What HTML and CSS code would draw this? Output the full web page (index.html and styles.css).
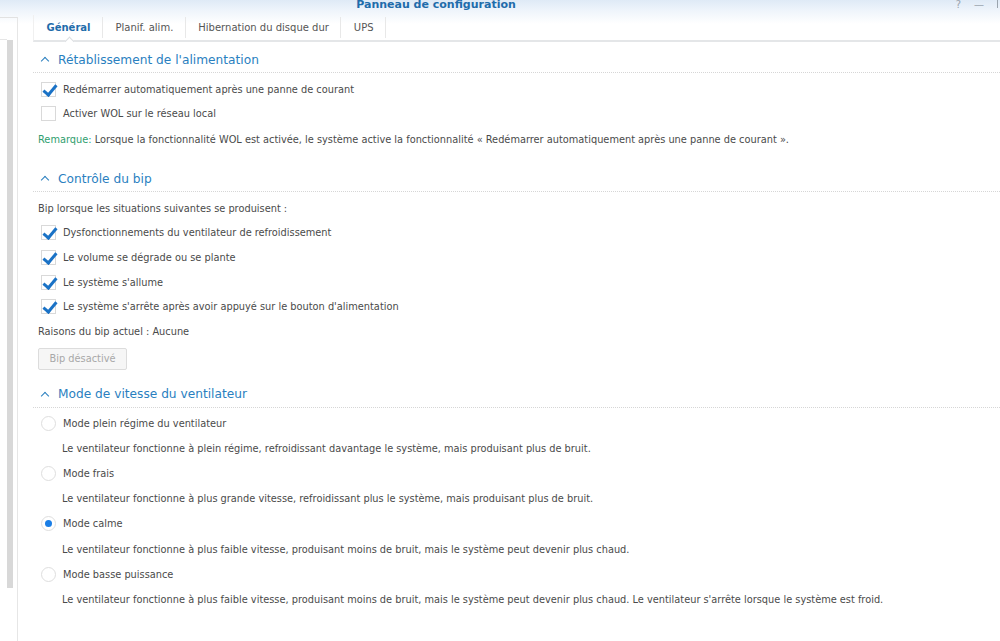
FILE: index.html
```html
<!DOCTYPE html>
<html lang="fr">
<head>
<meta charset="utf-8">
<title>Panneau de configuration</title>
<link rel="stylesheet" href="styles.css">
</head>
<body>
<div class="window">
  <div class="titlebar">
    <span class="title">Panneau de configuration</span>
    <div class="win-btns">
      <span class="wb">?</span>
      <span class="wb">—</span>
      <span class="wb-cut"></span>
    </div>
  </div>
  <div class="body">
    <aside class="sidebar">
      <div class="side-box"></div>
      <div class="side-scroll"></div>
    </aside>
    <main class="main">
      <nav class="tabs">
        <span class="tab active">Général</span>
        <span class="tab">Planif. alim.</span>
        <span class="tab">Hibernation du disque dur</span>
        <span class="tab">UPS</span>
      </nav>

      <section class="section s1">
        <h2 class="sec-head"><span class="caret"></span>Rétablissement de l'alimentation</h2>
        <div class="sec-body">
          <div class="row cb-row"><span class="cb checked"></span>Redémarrer automatiquement après une panne de courant</div>
          <div class="row cb-row"><span class="cb"></span>Activer WOL sur le réseau local</div>
          <div class="row note"><span class="green">Remarque:</span>&nbsp;Lorsque la fonctionnalité WOL est activée, le système active la fonctionnalité « Redémarrer automatiquement après une panne de courant ».</div>
        </div>
      </section>

      <section class="section s2">
        <h2 class="sec-head"><span class="caret"></span>Contrôle du bip</h2>
        <div class="sec-body">
          <div class="row r24">Bip lorsque les situations suivantes se produisent :</div>
          <div class="row r24 cb-row"><span class="cb checked"></span>Dysfonctionnements du ventilateur de refroidissement</div>
          <div class="row r24 cb-row"><span class="cb checked"></span>Le volume se dégrade ou se plante</div>
          <div class="row r24 cb-row"><span class="cb checked"></span>Le système s'allume</div>
          <div class="row r24 cb-row"><span class="cb checked"></span>Le système s'arrête après avoir appuyé sur le bouton d'alimentation</div>
          <div class="row r24">Raisons du bip actuel : Aucune</div>
          <button class="btn" disabled>Bip désactivé</button>
        </div>
      </section>

      <section class="section s3">
        <h2 class="sec-head"><span class="caret"></span>Mode de vitesse du ventilateur</h2>
        <div class="sec-body">
          <div class="row r25 rd-row"><span class="rd"></span>Mode plein régime du ventilateur</div>
          <div class="row r25 desc">Le ventilateur fonctionne à plein régime, refroidissant davantage le système, mais produisant plus de bruit.</div>
          <div class="row r25 rd-row"><span class="rd"></span>Mode frais</div>
          <div class="row r25 desc">Le ventilateur fonctionne à plus grande vitesse, refroidissant plus le système, mais produisant plus de bruit.</div>
          <div class="row r25 rd-row"><span class="rd on"></span>Mode calme</div>
          <div class="row r25 desc">Le ventilateur fonctionne à plus faible vitesse, produisant moins de bruit, mais le système peut devenir plus chaud.</div>
          <div class="row r25 rd-row"><span class="rd"></span>Mode basse puissance</div>
          <div class="row r25 desc">Le ventilateur fonctionne à plus faible vitesse, produisant moins de bruit, mais le système peut devenir plus chaud. Le ventilateur s'arrête lorsque le système est froid.</div>
        </div>
      </section>
    </main>
  </div>
</div>
</body>
</html>
```

FILE: styles.css
```css
* { box-sizing: border-box; }
html, body {
  margin: 0;
  padding: 0;
  width: 1000px;
  height: 641px;
  overflow: hidden;
  background: #fff;
}
body {
  font-family: "DejaVu Sans", Verdana, sans-serif;
  font-size: 9.8px;
  color: #4a4a4a;
}
.window {
  width: 1000px;
  height: 641px;
  display: flex;
  flex-direction: column;
  background: linear-gradient(#dfeaf6 0px, #eef4fb 10px, #ffffff 24px);
}
.titlebar {
  height: 12px;
  flex: none;
  display: flex;
  justify-content: center;
  align-items: flex-start;
  padding-right: 128px;
  position: relative;
}
.title {
  font-weight: bold;
  font-size: 11px;
  color: #1f6cab;
  line-height: 11px;
  margin-top: -1px;
}
.win-btns {
  position: absolute;
  right: 0;
  top: -1px;
  display: flex;
  align-items: flex-start;
  gap: 13px;
  color: #9aa4ae;
  font-size: 10px;
  line-height: 11px;
}
.wb-cut {
  width: 3px;
  height: 9px;
  border-left: 1.5px solid #9aa4ae;
  border-top: 1.5px solid #9aa4ae;
}
.body {
  flex: 1;
  display: flex;
}
.sidebar {
  width: 18px;
  flex: none;
  margin-top: 5px;
  border-top: 1px solid #e2e2e2;
  border-right: 1px solid #e6e6e6;
  display: flex;
  flex-direction: column;
}
.side-box {
  height: 22px;
  border-bottom: 1px solid #e6e6e6;
  margin-right: 10px;
}
.side-scroll {
  width: 6px;
  height: 548px;
  margin-left: 7px;
  background: #d8d8d8;
}
.main {
  flex: 1;
  padding-left: 15px;
  display: flex;
  flex-direction: column;
}
.tabs {
  margin-top: 3px;
  height: 27px;
  display: flex;
  align-items: stretch;
  border-bottom: 2px solid #e4e6e8;
  border-left: 1px solid #f0f0f0;
  position: relative;
}
.tab {
  display: flex;
  align-items: center;
  padding: 0 12.5px;
  font-size: 10px;
  color: #555;
  position: relative;
}
.tab::after {
  content: "";
  position: absolute;
  right: 0;
  top: 2px;
  bottom: 2px;
  width: 1px;
  background: #e8e8e8;
}
.tab.active {
  color: #1f6cab;
  font-weight: bold;
}
.tab.active::before {
  content: "";
  position: absolute;
  left: 50%;
  bottom: -5px;
  width: 6px;
  height: 6px;
  margin-left: -3px;
  background: #fff;
  border-left: 1px solid #dcdfe2;
  border-top: 1px solid #dcdfe2;
  transform: rotate(45deg);
}
.section { display: flex; flex-direction: column; }
.s1 { margin-top: 6px; }
.s2 { margin-top: 16px; }
.s3 { margin-top: 13px; }
.sec-head {
  margin: 0;
  height: 25px;
  display: flex;
  align-items: center;
  font-weight: normal;
  font-size: 12.2px;
  color: #2a7fbf;
  border-bottom: 1px dotted #d6d6d6;
  padding-left: 9px;
  padding-bottom: 1px;
}
.caret {
  width: 6px;
  height: 6px;
  border-left: 1.5px solid #2a7fbf;
  border-top: 1.5px solid #2a7fbf;
  transform: rotate(45deg);
  margin-top: 3px;
  margin-right: 10px;
}
.sec-body {
  padding: 4px 0 0 5px;
  display: flex;
  flex-direction: column;
  align-items: flex-start;
}
.s3 .sec-body { padding-top: 3px; }
.row {
  height: 24px;
  display: flex;
  align-items: center;
  white-space: nowrap;
}
.r24 { height: 24.6px; }
.r25 { height: 25.2px; }
.note { margin-top: 2px; }
.green { color: #2f9e6e; }
.cb-row, .rd-row { padding-left: 3px; }
.cb {
  width: 15px;
  height: 15px;
  border: 1px solid #d9d9d9;
  background: #fff;
  margin-right: 7px;
  position: relative;
  flex: none;
}
.cb.checked::after {
  content: "";
  position: absolute;
  left: 4px;
  top: -1px;
  width: 5px;
  height: 11px;
  border-right: 3px solid #1a72c6;
  border-bottom: 3px solid #1a72c6;
  transform: rotate(40deg);
}
.rd {
  width: 15px;
  height: 15px;
  border-radius: 50%;
  border: 1px solid #dedede;
  background: #fff;
  margin-right: 7px;
  flex: none;
  position: relative;
}
.rd.on::after {
  content: "";
  position: absolute;
  left: 3px;
  top: 3px;
  width: 7px;
  height: 7px;
  border-radius: 50%;
  background: #1a7ee6;
}
.desc { padding-left: 24px; }
.btn {
  margin-top: 4px;
  height: 22px;
  width: 89px;
  font-family: inherit;
  font-size: 9.8px;
  color: #a8a8a8;
  background: #f6f6f6;
  border: 1px solid #dcdcdc;
  border-radius: 2px;
  padding: 0;
}
```
